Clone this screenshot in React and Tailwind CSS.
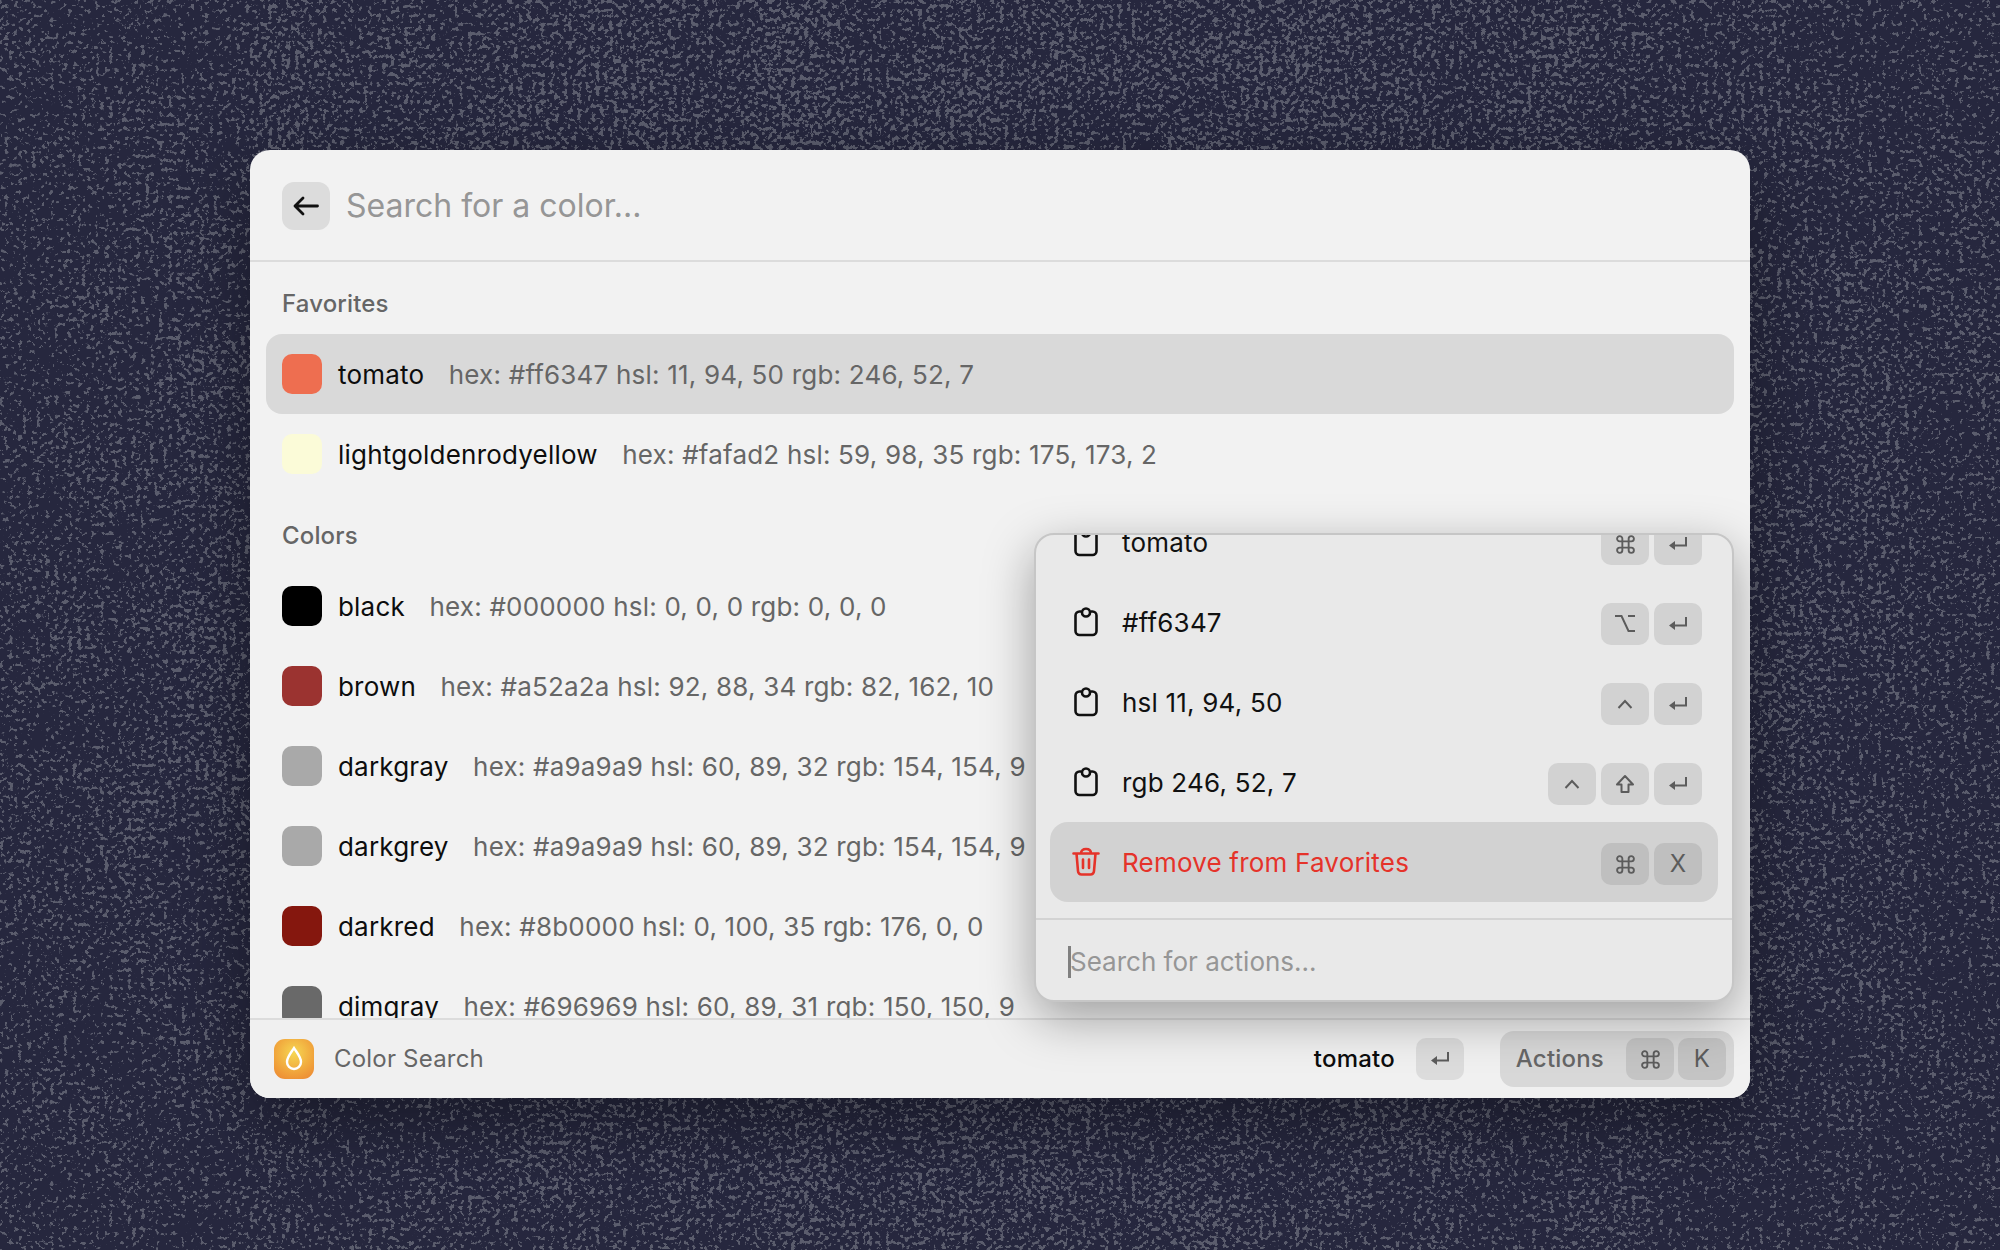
import React from 'react';

const font = { fontFamily: 'Inter, "Liberation Sans", sans-serif' };

const favorites = [
  { name: 'tomato', color: 'bg-[#ee6e50]', detail: 'hex: #ff6347 hsl: 11, 94, 50 rgb: 246, 52, 7', active: true },
  { name: 'lightgoldenrodyellow', color: 'bg-[#fbfbd8]', detail: 'hex: #fafad2 hsl: 59, 98, 35 rgb: 175, 173, 2' },
];

const colors = [
  { name: 'black', color: 'bg-black', detail: 'hex: #000000 hsl: 0, 0, 0 rgb: 0, 0, 0' },
  { name: 'brown', color: 'bg-[#9b3330]', detail: 'hex: #a52a2a hsl: 92, 88, 34 rgb: 82, 162, 10' },
  { name: 'darkgray', color: 'bg-[#a9a9a9]', detail: 'hex: #a9a9a9 hsl: 60, 89, 32 rgb: 154, 154, 9' },
  { name: 'darkgrey', color: 'bg-[#a9a9a9]', detail: 'hex: #a9a9a9 hsl: 60, 89, 32 rgb: 154, 154, 9' },
  { name: 'darkred', color: 'bg-[#85170e]', detail: 'hex: #8b0000 hsl: 0, 100, 35 rgb: 176, 0, 0' },
  { name: 'dimgray', color: 'bg-[#696969]', detail: 'hex: #696969 hsl: 60, 89, 31 rgb: 150, 150, 9' },
];

const ReturnIcon = () => (
  <svg width="20" height="16" viewBox="0 0 20 16" fill="none">
    <path d="M18 1v8.5H6" stroke="currentColor" strokeWidth="2" />
    <path d="M1 9.5 7 5v9z" fill="currentColor" />
  </svg>
);

const CommandIcon = () => (
  <svg width="21" height="21" viewBox="0 0 20 20" fill="none" stroke="currentColor" strokeWidth="1.8">
    <path d="M7 7h6v6H7zM7 7H4.5A2.5 2.5 0 1 1 7 4.5zM13 7V4.5A2.5 2.5 0 1 1 15.5 7zM13 13h2.500A2.500 2.500 0 1 1 13 15.500zM7 13v2.500A2.500 2.500 0 1 1 4.500 13z" />
  </svg>
);

const OptionIcon = () => (
  <svg width="22" height="20" viewBox="0 0 22 20" fill="none" stroke="currentColor" strokeWidth="2">
    <path d="M1 2h6.500l7 15H21M14 2h7" />
  </svg>
);

const CaretIcon = () => (
  <svg width="16" height="10" viewBox="0 0 16 10" fill="none" stroke="currentColor" strokeWidth="2">
    <path d="M1.500 9 8 2l6.500 7" />
  </svg>
);

const ShiftIcon = () => (
  <svg width="20" height="20" viewBox="0 0 20 20" fill="none" stroke="currentColor" strokeWidth="2" strokeLinejoin="round">
    <path d="M10 2 2 10.500h4.500V18h7v-7.500H18z" />
  </svg>
);

const ClipboardIcon = () => (
  <svg width="26" height="30" viewBox="0 0 26 30" fill="none" stroke="currentColor" strokeWidth="2.600">
    <path d="M8 4.500H6.500A4 4 0 0 0 2.500 8.500V24a4 4 0 0 0 4 4h13a4 4 0 0 0 4-4V8.500a4 4 0 0 0-4-4H18" />
    <circle cx="13" cy="5.500" r="4" />
  </svg>
);

const TrashIcon = () => (
  <svg width="30" height="30" viewBox="0 0 30 30" fill="none" stroke="currentColor" strokeWidth="2.600" strokeLinecap="round" strokeLinejoin="round">
    <path d="M2.500 6.500h25M10 6.500C10 3.500 12 2 15 2s5 1.500 5 4.500M5.500 6.500l1.500 17.500a3.500 3.500 0 0 0 3.500 3.500h9a3.500 3.500 0 0 0 3.500-3.500l1.500-17.500M12 12.500v8.500M18 12.500v8.500" />
  </svg>
);

const Key = ({ children, className = 'bg-[#d2d2d2]' }) => (
  <span className={`flex h-[42px] w-[48px] items-center justify-center rounded-[10px] text-[24px] text-[#5c5c5c] ${className}`}>
    {children}
  </span>
);

const ColorRow = ({ item }) => (
  <div className={`flex h-[80px] items-center rounded-[16px] px-[16px] tracking-[0.2px] ${item.active ? 'bg-[#d9d9d9]' : ''}`}>
    <span className={`h-[40px] w-[40px] shrink-0 rounded-[10px] ${item.color}`} />
    <span className="ml-[16px] text-[26px] text-[#0d0d0d]">{item.name}</span>
    <span className="ml-[24.5px] text-[26px] text-[#666666]">{item.detail}</span>
  </div>
);

const SectionLabel = ({ children }) => (
  <div className="flex h-[72px] items-center px-[16px] pt-[12px] text-[24px] font-medium tracking-[0.15px] text-[#666666]">{children}</div>
);

const ActionRow = ({ label, keys, danger }) => (
  <div className={`flex h-[80px] shrink-0 items-center rounded-[18px] pl-[21px] pr-[16px] tracking-[0.2px] ${danger ? 'bg-[#d2d2d2]' : ''}`}>
    <span className={`flex w-[30px] justify-center ${danger ? 'text-[#e5332a]' : 'text-[#111111]'}`}>
      {danger ? <TrashIcon /> : <ClipboardIcon />}
    </span>
    <span className={`ml-[21px] text-[26px] ${danger ? 'text-[#e5332a]' : 'text-[#111111]'}`}>{label}</span>
    <span className="ml-auto flex gap-[5px] pt-[4px]">
      {keys.map((k, i) => (
        <Key key={i} className={danger ? 'bg-[#bfbfbf]' : 'bg-[#d2d2d2]'}>{k}</Key>
      ))}
    </span>
  </div>
);

const Background = () => (
  <svg className="absolute inset-0 h-full w-full" width="2000" height="1250">
    <defs>
      <radialGradient id="density" gradientUnits="userSpaceOnUse" cx="1000" cy="520" r="1180">
        <stop offset="0" stopColor="#fff" stopOpacity="1" />
        <stop offset="0.55" stopColor="#fff" stopOpacity="0.85" />
        <stop offset="1" stopColor="#fff" stopOpacity="0.5" />
      </radialGradient>
      <filter id="grain" x="0" y="0" width="100%" height="100%" colorInterpolationFilters="sRGB">
        <feTurbulence type="fractalNoise" baseFrequency="0.22" numOctaves="3" seed="11" result="noise" />
        <feColorMatrix in="noise" type="matrix" values="0 0 0 0 0  0 0 0 0 0  0 0 0 0 0  1 0 0 0 0" result="alpha" />
        <feTurbulence type="fractalNoise" baseFrequency="0.012" numOctaves="2" seed="4" result="patch" />
        <feColorMatrix in="patch" type="matrix" values="0 0 0 0 0  0 0 0 0 0  0 0 0 0 0  1 0 0 0 0" result="patchAlpha" />
        <feComposite in="alpha" in2="patchAlpha" operator="arithmetic" k1="0" k2="1" k3="0.14" k4="-0.07" result="patched" />
        <feComposite in="patched" in2="SourceGraphic" operator="arithmetic" k1="0" k2="1" k3="0.2" k4="0" result="mix" />
        <feComponentTransfer in="mix" result="mask">
          <feFuncA type="linear" slope="16" intercept="-11.600" />
        </feComponentTransfer>
        <feFlood floodColor="#5b5d6d" />
        <feComposite in2="mask" operator="in" />
      </filter>
    </defs>
    <rect width="2000" height="1250" fill="#26273e" />
    <rect width="2000" height="1250" fill="url(#density)" filter="url(#grain)" />
  </svg>
);

const App = () => {
  return (
    <div className="relative flex h-[1250px] w-[2000px] items-center justify-center overflow-hidden pb-[2px]" style={font}>
      <Background />

      <div className="relative flex h-[948px] w-[1500px] flex-col overflow-hidden rounded-[20px] bg-[#f2f2f2] shadow-[0_24px_70px_rgba(0,0,0,0.35)]">
        <header className="flex h-[112px] shrink-0 items-center border-b-2 border-[#dcdcdc] px-[32px] pt-[2px]">
          <span className="flex h-[48px] w-[48px] items-center justify-center rounded-[12px] bg-[#dcdcdc]">
            <svg width="26" height="20" viewBox="0 0 26 20" fill="none" stroke="#111111" strokeWidth="2.800" strokeLinecap="round" strokeLinejoin="round">
              <path d="M24.500 10H2M10 2 2 10l8 8" />
            </svg>
          </span>
          <span className="ml-[16px] text-[32px] text-[#969696]">Search for a color...</span>
        </header>

        <div className="min-h-0 flex-1 overflow-hidden px-[16px]">
          <SectionLabel>Favorites</SectionLabel>
          {favorites.map((item) => (
            <ColorRow key={item.name} item={item} />
          ))}
          <SectionLabel>Colors</SectionLabel>
          {colors.map((item) => (
            <ColorRow key={item.name} item={item} />
          ))}
        </div>

        <footer className="flex h-[80px] shrink-0 items-center border-t-2 border-[#dcdcdc] bg-[#f0f0f0] pl-[24px] pr-[16px] tracking-[0.2px]">
          <span className="flex h-[40px] w-[40px] items-center justify-center rounded-[11px] bg-[radial-gradient(circle_at_50%_35%,#f6d752,#f0a03a_65%,#ec8432)]">
            <svg width="20" height="28" viewBox="0 0 20 28" fill="none" stroke="#ffffff" strokeWidth="2.400">
              <path d="M10 3c3 5 7 9 7 14a7 7 0 0 1-14 0c0-5 4-9 7-14z" />
            </svg>
          </span>
          <span className="ml-[20px] text-[24px] text-[#666666]">Color Search</span>
          <span className="ml-auto text-[24px] font-medium text-[#0d0d0d]">tomato</span>
          <Key className="ml-[21px] bg-[#dcdcdc]"><ReturnIcon /></Key>
          <div className="ml-[36px] flex h-[56px] items-center rounded-[14px] bg-[#d8d8d8] pl-[16px] pr-[8px]">
            <span className="text-[24px] font-medium text-[#666666]">Actions</span>
            <span className="ml-[22px] flex gap-[4px]">
              <Key className="bg-[#c4c4c4]"><CommandIcon /></Key>
              <Key className="bg-[#c4c4c4]">K</Key>
            </span>
          </div>
        </footer>

        {/* actions popover, list is scrolled a little so first row is cut */}
        <div className="absolute left-[784px] top-[383px] flex h-[469px] w-[700px] flex-col overflow-hidden rounded-[20px] border-2 border-[#c6c6c6] bg-[#e9e9e9] shadow-[0_16px_50px_rgba(0,0,0,0.35)]">
          <div className="flex h-[383px] shrink-0 flex-col overflow-hidden px-[14px]">
            <div className="-mt-[33px] flex flex-col">
              <ActionRow label="tomato" keys={[<CommandIcon />, <ReturnIcon />]} />
              <ActionRow label="#ff6347" keys={[<OptionIcon />, <ReturnIcon />]} />
              <ActionRow label="hsl 11, 94, 50" keys={[<CaretIcon />, <ReturnIcon />]} />
              <ActionRow label="rgb 246, 52, 7" keys={[<CaretIcon />, <ShiftIcon />, <ReturnIcon />]} />
              <ActionRow label="Remove from Favorites" keys={[<CommandIcon />, 'X']} danger />
            </div>
          </div>
          <div className="flex flex-1 items-center border-t-2 border-[#d3d3d3] px-[32px] pt-[3px]">
            <span className="h-[32px] w-[3px] shrink-0 bg-[#808080]" />
            <span className="-ml-[1px] text-[26px] text-[#969696]">Search for actions...</span>
          </div>
        </div>
      </div>
    </div>
  );
};

export default App;
